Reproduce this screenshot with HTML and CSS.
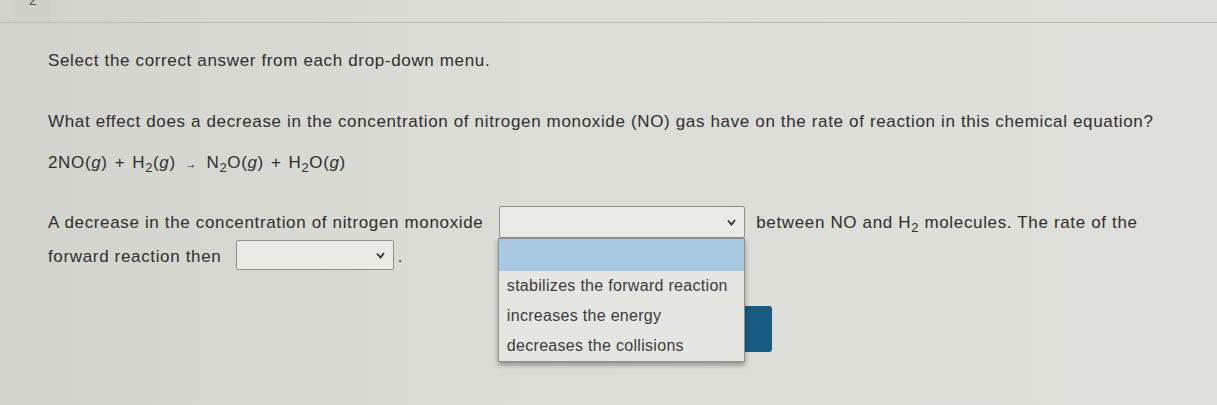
FILE: index.html
```html
<!DOCTYPE html>
<html lang="en">
<head>
  <meta charset="UTF-8" />
  <meta name="viewport" content="width=device-width, initial-scale=1.0" />
  <title>Question 2</title>
  <link rel="stylesheet" href="styles.css">
</head>
<body>
  <div class="topbar">
    <div class="qnum"><span>2</span></div>
  </div>

  <div class="question">
    <p class="instructions">Select the correct answer from each drop-down menu.</p>

    <p class="prompt">What effect does a decrease in the concentration of nitrogen monoxide (NO) gas have on the rate of reaction in this chemical equation?</p>

    <p class="equation">2NO(<i>g</i>)<span class="op">+</span>H<sub>2</sub>(<i>g</i>)<span class="op arrow">&rarr;</span>N<sub>2</sub>O(<i>g</i>)<span class="op">+</span>H<sub>2</sub>O(<i>g</i>)</p>

    <p class="sentence">
      A decrease in the concentration of nitrogen monoxide
      <span class="dd dd-wide open">
        <span class="dd-box">
          <svg class="chev" width="9" height="7" viewBox="0 0 9 7"><polyline points="1,1.5 4.5,5.5 8,1" fill="none" stroke="#333" stroke-width="1.8" /></svg>
        </span>
        <span class="dd-menu">
          <span class="dd-item selected"></span>
          <span class="dd-item">stabilizes the forward reaction</span>
          <span class="dd-item">increases the energy</span>
          <span class="dd-item">decreases the collisions</span>
        </span>
      </span>
      between NO and H<sub>2</sub> molecules. The rate of the<br>
      forward reaction then
      <span class="dd dd-narrow">
        <span class="dd-box">
          <svg class="chev" width="9" height="7" viewBox="0 0 9 7"><polyline points="1,1.5 4.5,5.5 8,1" fill="none" stroke="#333" stroke-width="1.8" /></svg>
        </span>
      </span>.
    </p>

    <div class="actions">
      <button class="btn-next">Next</button>
    </div>
  </div>
</body>
</html>
```

FILE: styles.css
```css
* { box-sizing: border-box; }
body {
  margin: 0;
  background: linear-gradient(90deg, #d2d3cd 0%, #dbdcd6 35%, #dfe0db 100%);
  font-family: 'Liberation Sans', Arial, sans-serif;
  color: #2f2f2f;
  height: 405px;
  overflow: hidden;
}
.topbar {
  height: 23px;
  border-bottom: 1px solid #b9bab4;
  padding-left: 15px;
}
.qnum {
  width: 36px;
  height: 22px;
  background: #cfd0ca;
  overflow: hidden;
  text-align: center;
  font-size: 14px;
  color: #555;
}
.qnum span {
  display: block;
  margin-top: -8px;
}
.question {
  padding-left: 48px;
  font-size: 17px;
  letter-spacing: 0.65px;
}
p { margin: 0; }
.instructions {
  margin-top: 28px;
  line-height: 20px;
}
.prompt {
  line-height: 20px;
  margin-top: 41px;
}
.equation {
  line-height: 20px;
  margin-top: 21px;
}
.equation i { font-style: italic; }
.op {
  margin: 0 7px;
}
.arrow {
  font-size: 12px;
  margin: 0 9px;
}
sub {
  font-size: 13px;
  vertical-align: -4px;
  line-height: 0;
}
.sentence {
  line-height: 34px;
  margin-top: 32px;
}
.dd {
  display: inline-block;
  position: relative;
  vertical-align: top;
  margin: 0 6px 0 10px;
  letter-spacing: 0;
}
.dd-box {
  display: flex;
  align-items: center;
  justify-content: flex-end;
  padding-right: 8px;
  height: 32px;
  background: #eaebe6;
  border: 1px solid #8f908b;
  border-radius: 2px;
}
.dd-wide .dd-box { width: 246px; }
.dd-narrow .dd-box { width: 158px; height: 30px; }
.dd-narrow { margin: 0 4px 0 9px; }
.dd-menu {
  position: absolute;
  top: 100%;
  left: -1px;
  width: 247px;
  display: flex;
  flex-direction: column;
  background: #e5e6e1;
  border: 1px solid #8f908b;
  box-shadow: 0 3px 5px rgba(0, 0, 0, 0.35);
  z-index: 2;
  line-height: 30px;
  font-size: 16px;
  letter-spacing: 0.3px;
  color: #3c3c3c;
}
.dd-item {
  height: 30px;
  padding-left: 8px;
  white-space: nowrap;
}
.dd-item.selected {
  background: #a9c9e2;
  height: 32px;
}
.actions {
  margin-top: 32px;
  padding-left: 614px;
}
.btn-next {
  width: 110px;
  height: 46px;
  background: #175b82;
  color: #fff;
  border: none;
  border-radius: 3px;
  font-size: 16px;
}
```
